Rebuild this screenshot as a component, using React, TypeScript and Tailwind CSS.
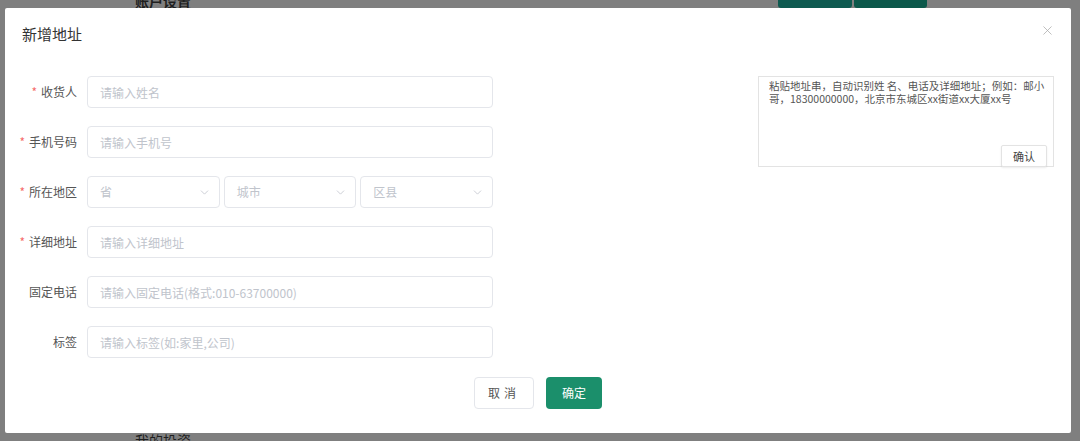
import { ChevronDown, X } from "lucide-react";

const font = { fontFamily: '"Noto Sans CJK SC", "Noto Sans", sans-serif' };

type FieldProps = {
  label: string;
  required?: boolean;
  children: React.ReactNode;
};

function Field({ label, required, children }: FieldProps) {
  return (
    <div className="flex h-[32px] items-center gap-[10px]">
      <label className="flex w-[72px] items-center justify-end text-[12px] text-[#555]">
        {required && <span className="mr-[4px] text-[#f56c6c]">*</span>}
        {label}
      </label>
      {children}
    </div>
  );
}

function TextInput({ placeholder }: { placeholder: string }) {
  return (
    <input
      placeholder={placeholder}
      className="h-[32px] w-[406px] rounded-[4px] border border-[#e4e6eb] bg-white px-[12px] text-[12px] text-[#333] outline-none placeholder:text-[#c0c4cc]"
      style={font}
    />
  );
}

function SelectBox({ placeholder }: { placeholder: string }) {
  return (
    <div className="flex h-[32px] w-[133px] items-center justify-between rounded-[4px] border border-[#e4e6eb] bg-white pl-[12px] pr-[8px] text-[12px] text-[#c0c4cc]">
      <span>{placeholder}</span>
      <ChevronDown size={13} strokeWidth={1.5} className="text-[#c0c4cc]" />
    </div>
  );
}

export default function App() {
  return (
    <div className="relative h-[441px] w-[1080px] overflow-hidden bg-[#7f7f7f]" style={font}>
      {/* page behind the mask */}
      <div className="absolute left-[135px] top-[-9px] text-[14px] font-bold text-[#1f1f1f]">账户设置</div>
      <div className="absolute left-[778px] top-[-20px] flex gap-[2px]">
        <div className="h-[28px] w-[74px] rounded-[3px] bg-[#0e5a50]" />
        <div className="h-[28px] w-[73px] rounded-[3px] bg-[#0b584a]" />
      </div>
      <div className="absolute left-[135px] top-[430px] text-[14px] text-[#1f1f1f]">我的投资</div>

      {/* dialog */}
      <div className="absolute left-[5px] top-[8px] flex h-[425px] w-[1066px] flex-col rounded-[2px] bg-white">
        <div className="flex h-[52px] items-center justify-between pl-[17px] pr-[16px]">
          <h2 className="text-[15px] text-[#333]">新增地址</h2>
          <X size={15} strokeWidth={1.2} className="-mt-[7px] text-[#aaa]" />
        </div>

        <div className="mt-[16px] flex justify-between pr-[17px]">
          <div className="flex flex-col gap-[18px]">
            <Field label="收货人" required>
              <TextInput placeholder="请输入姓名" />
            </Field>
            <Field label="手机号码" required>
              <TextInput placeholder="请输入手机号" />
            </Field>
            <Field label="所在地区" required>
              <div className="flex w-[406px] gap-[4px]">
                <SelectBox placeholder="省" />
                <SelectBox placeholder="城市" />
                <SelectBox placeholder="区县" />
              </div>
            </Field>
            <Field label="详细地址" required>
              <TextInput placeholder="请输入详细地址" />
            </Field>
            <Field label="固定电话">
              <TextInput placeholder="请输入固定电话(格式:010-63700000)" />
            </Field>
            <Field label="标签">
              <TextInput placeholder="请输入标签(如:家里,公司)" />
            </Field>
          </div>

          <div className="relative h-[91px] w-[296px] border border-[#e3e3e3] bg-white">
            <p className="whitespace-nowrap pl-[10px] pt-[2px] text-[10.5px] leading-[13px] text-[#555]">
              粘贴地址串，自动识别姓 名、电话及详细地址；例如：邮小
              <br />
              哥，18300000000，北京市东城区xx街道xx大厦xx号
            </p>
            <button className="absolute bottom-[-1px] right-[6px] h-[22px] w-[46px] rounded-[2px] border border-[#e3e3e3] bg-white text-[11px] text-[#444] shadow-[0_1px_2px_rgba(0,0,0,0.08)]">
              确认
            </button>
          </div>
        </div>

        <div className="mt-[19px] flex justify-center gap-[12px]">
          <button className="h-[32px] w-[60px] rounded-[4px] border border-[#e4e6eb] bg-white text-[12px] tracking-[4px] text-[#555]">
            取消
          </button>
          <button className="h-[32px] w-[56px] rounded-[4px] bg-[#1b8f6b] text-[12px] text-white">确定</button>
        </div>
      </div>
    </div>
  );
}
